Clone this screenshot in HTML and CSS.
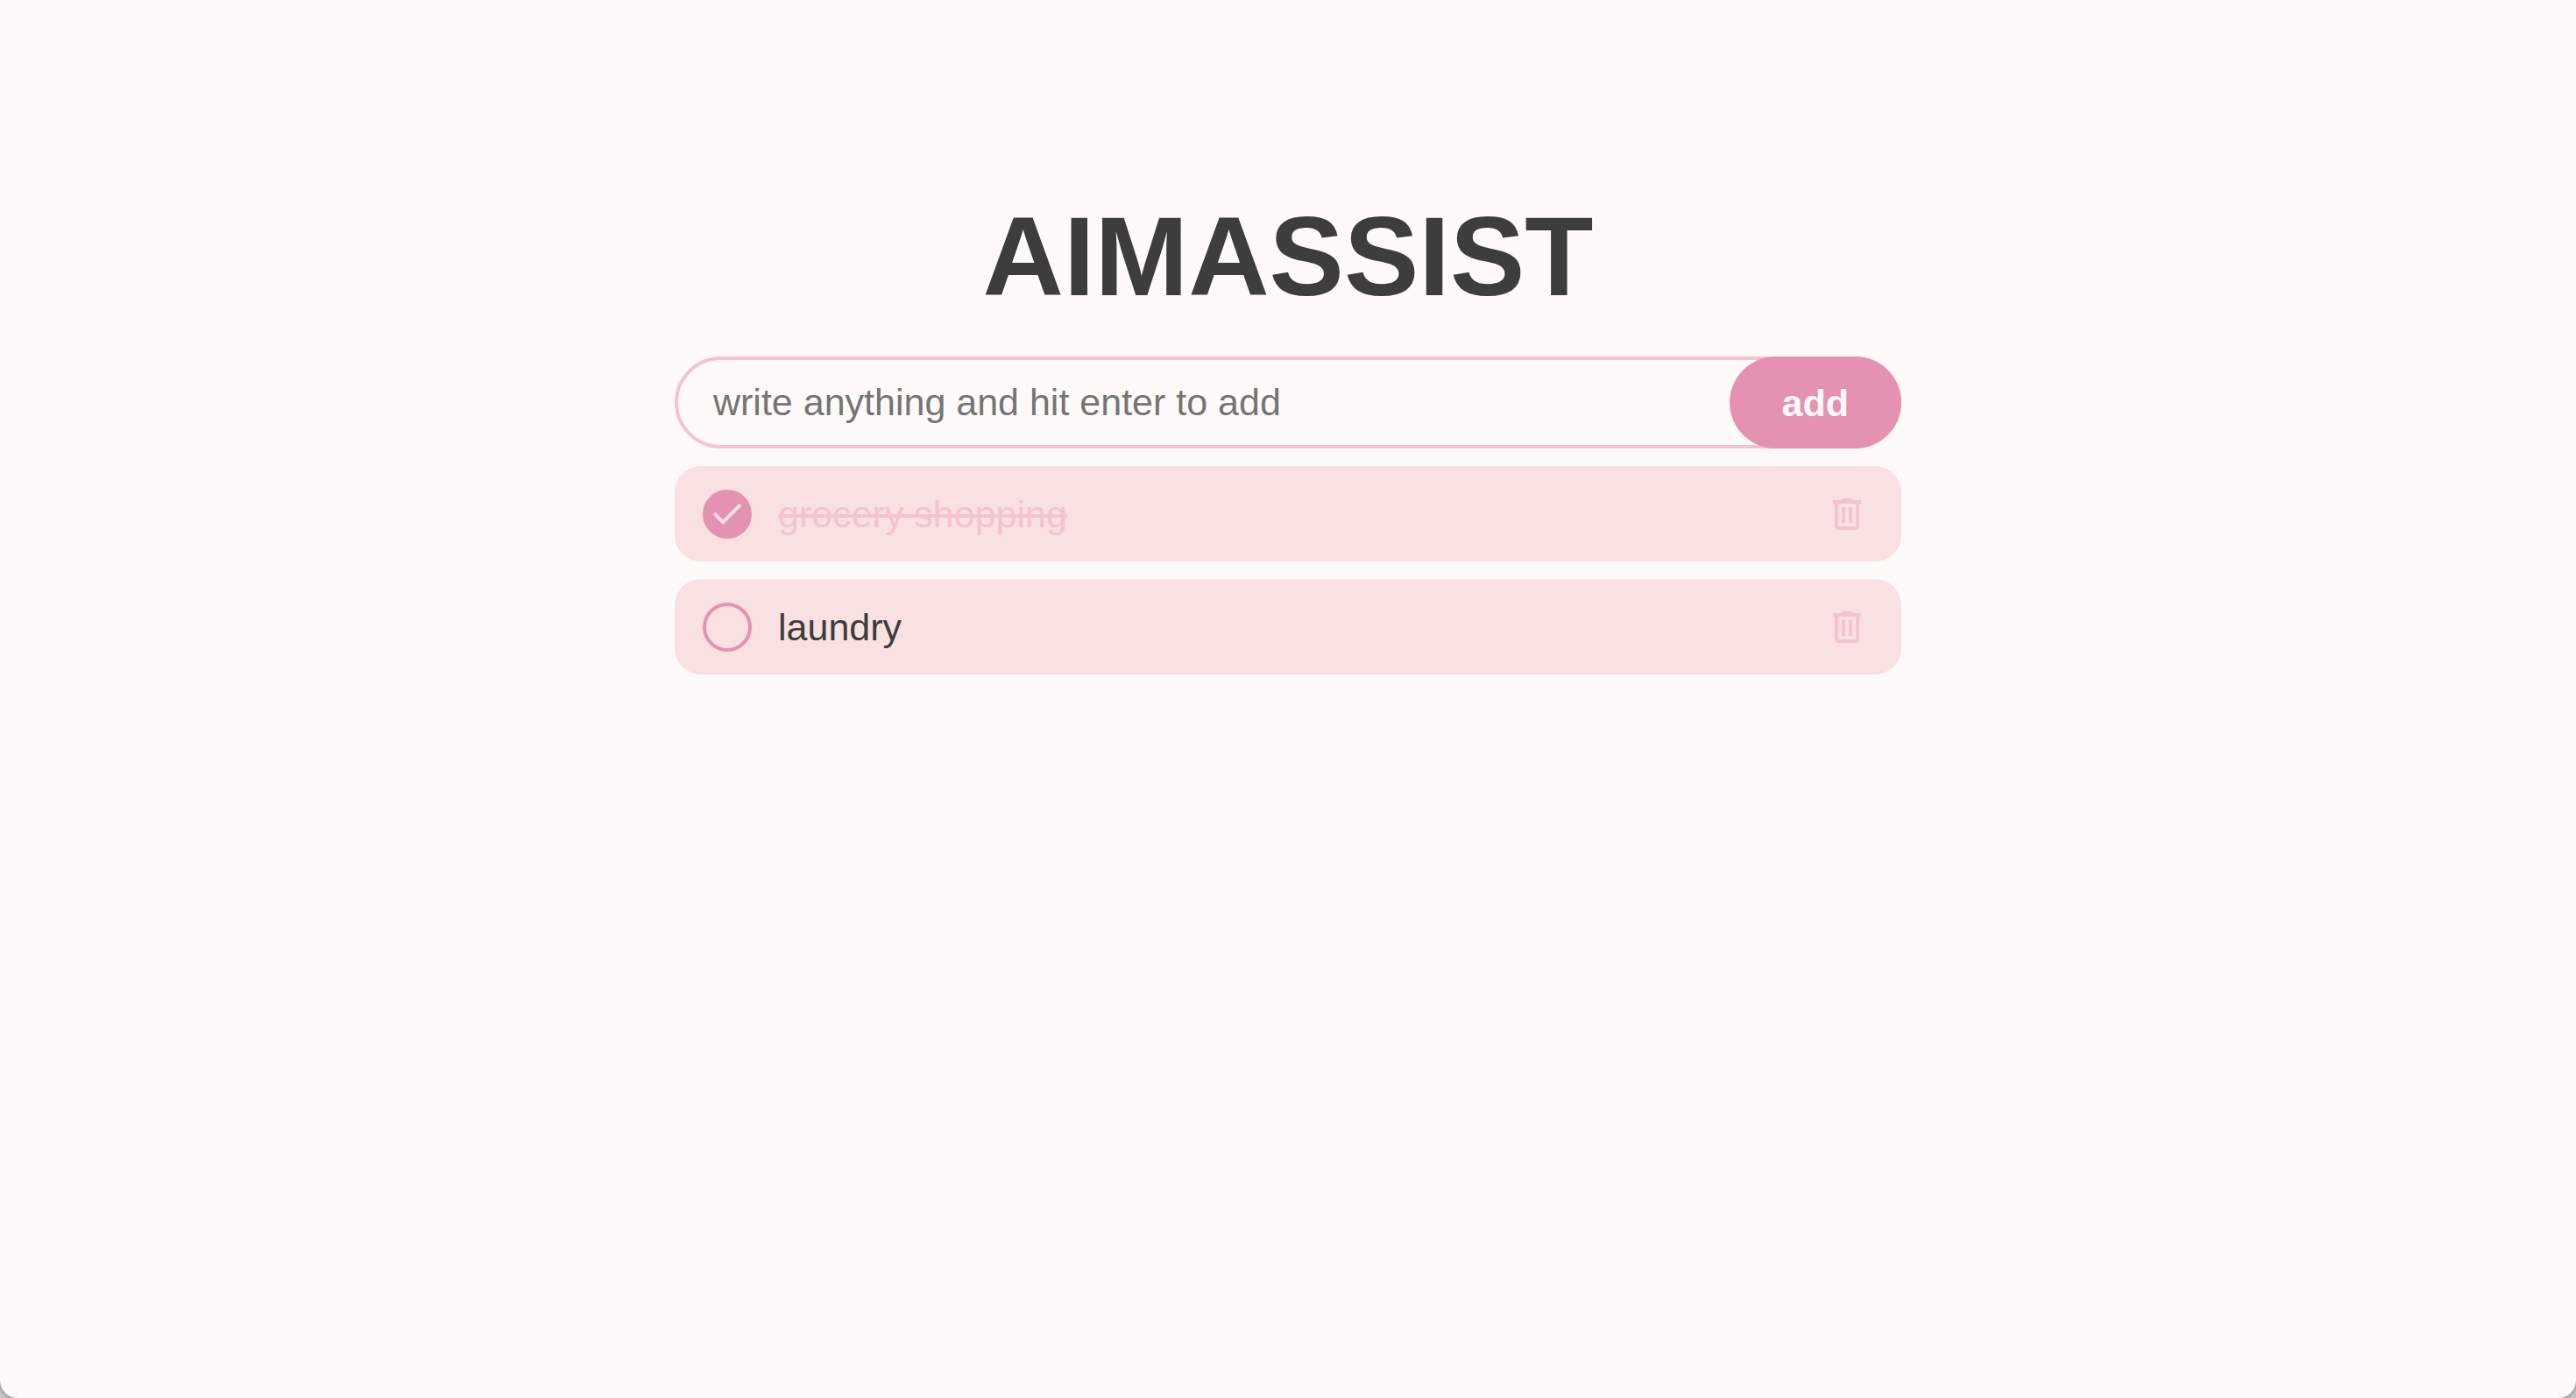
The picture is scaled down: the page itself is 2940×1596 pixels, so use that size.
FILE: index.html
```html
<!DOCTYPE html>
<html lang="en">
<head>
<meta charset="utf-8">
<meta name="viewport" content="width=device-width, initial-scale=1">
<title>AIMASSIST</title>
<link rel="stylesheet" href="styles.css">
</head>
<body>
<div class="window">
  <main class="app">
    <h1 class="title">AIMASSIST</h1>
    <form class="todo-form">
      <input class="todo-input" type="text" placeholder="write anything and hit enter to add" aria-label="New task" autocomplete="off">
      <button class="add-button" type="button">add</button>
    </form>
    <ul class="todo-list">
      <li class="todo">
        <span class="check">
          <input class="check-box" type="checkbox" id="todo-0" checked>
          <svg class="check-icon" viewBox="0 -960 960 960" aria-hidden="true"><path d="M382-240 154-468l57-57 171 171 367-367 57 57-424 424Z"/></svg>
        </span>
        <label class="todo-text" for="todo-0">grocery shopping</label>
        <button class="delete-button" type="button" aria-label="Delete grocery shopping">
          <svg class="delete-icon" viewBox="0 -960 960 960" aria-hidden="true"><path d="M280-120q-33 0-56.500-23.500T200-200v-520h-40v-80h200v-40h240v40h200v80h-40v520q0 33-23.500 56.500T680-120H280Zm400-600H280v520h400v-520ZM360-280h80v-360h-80v360Zm160 0h80v-360h-80v360Z"/></svg>
        </button>
      </li>
      <li class="todo">
        <span class="check">
          <input class="check-box" type="checkbox" id="todo-1">
          <svg class="check-icon" viewBox="0 -960 960 960" aria-hidden="true"><path d="M382-240 154-468l57-57 171 171 367-367 57 57-424 424Z"/></svg>
        </span>
        <label class="todo-text" for="todo-1">laundry</label>
        <button class="delete-button" type="button" aria-label="Delete laundry">
          <svg class="delete-icon" viewBox="0 -960 960 960" aria-hidden="true"><path d="M280-120q-33 0-56.500-23.500T200-200v-520h-40v-80h200v-40h240v40h200v80h-40v520q0 33-23.500 56.500T680-120H280Zm400-600H280v520h400v-520ZM360-280h80v-360h-80v360Zm160 0h80v-360h-80v360Z"/></svg>
        </button>
      </li>
    </ul>
  </main>
</div>
</body>
</html>
```
FILE: styles.css
```css
:root {
  --background: #fffafa;
  --card: #f9e1e1;
  --soft: #f5c2d0;
  --accent: #e592b2;
  --text: #3d3d3d;
}

* {
  box-sizing: border-box;
}

body {
  margin: 0;
  background: #c4c4c4;
  color: var(--text);
  font: 43px/50px "Liberation Sans", Arial, Helvetica, sans-serif;
}

.window {
  min-height: 100vh;
  padding: 219px 20px 80px;
  background: var(--background);
  border-radius: 0 0 20px 20px;
  box-shadow: 0 0 4px #666;
}

.app {
  max-width: 1400px;
  margin: 0 auto;
}

.title {
  margin: 0 0 40px;
  font-size: 128px;
  line-height: 148px;
  text-align: center;
}

.todo-form {
  display: grid;
  margin-bottom: 20px;
}

.todo-input,
.add-button {
  grid-area: 1 / 1;
  height: 105px;
  border-radius: 53px;
  font: inherit;
}

.todo-input {
  width: 100%;
  padding: 0 236px 0 40px;
  border: 4px solid var(--soft);
  background: transparent;
  color: var(--text);
  outline: none;
}

.todo-input::placeholder {
  color: #757575;
  opacity: 1;
}

.add-button {
  justify-self: end;
  padding: 0 60px;
  border: 0;
  background: var(--accent);
  color: var(--background);
  font-weight: bold;
  cursor: pointer;
}

.todo-list {
  display: grid;
  gap: 20px;
  margin: 0;
  padding: 0;
  list-style: none;
}

.todo {
  display: flex;
  align-items: center;
  gap: 30px;
  padding: 27px 32px 26px;
  border-radius: 30px;
  background: var(--card);
}

.check {
  display: grid;
  place-items: center;
}

.check-box {
  grid-area: 1 / 1;
  width: 56px;
  height: 56px;
  margin: 0;
  border: 4px solid var(--accent);
  border-radius: 50%;
  appearance: none;
  cursor: pointer;
}

.check-box:checked {
  background: var(--accent);
}

.check-icon {
  grid-area: 1 / 1;
  width: 48px;
  height: 48px;
  fill: var(--card);
  pointer-events: none;
  visibility: hidden;
}

.check-box:checked + .check-icon {
  visibility: visible;
}

.todo-text {
  flex: 1;
  cursor: pointer;
}

.check:has(:checked) + .todo-text {
  color: var(--soft);
  text-decoration: line-through 4px;
}

.delete-button {
  display: flex;
  padding: 0 6px;
  border: 0;
  background: none;
  cursor: pointer;
}

.delete-icon {
  width: 48px;
  height: 48px;
  fill: var(--soft);
}
```
